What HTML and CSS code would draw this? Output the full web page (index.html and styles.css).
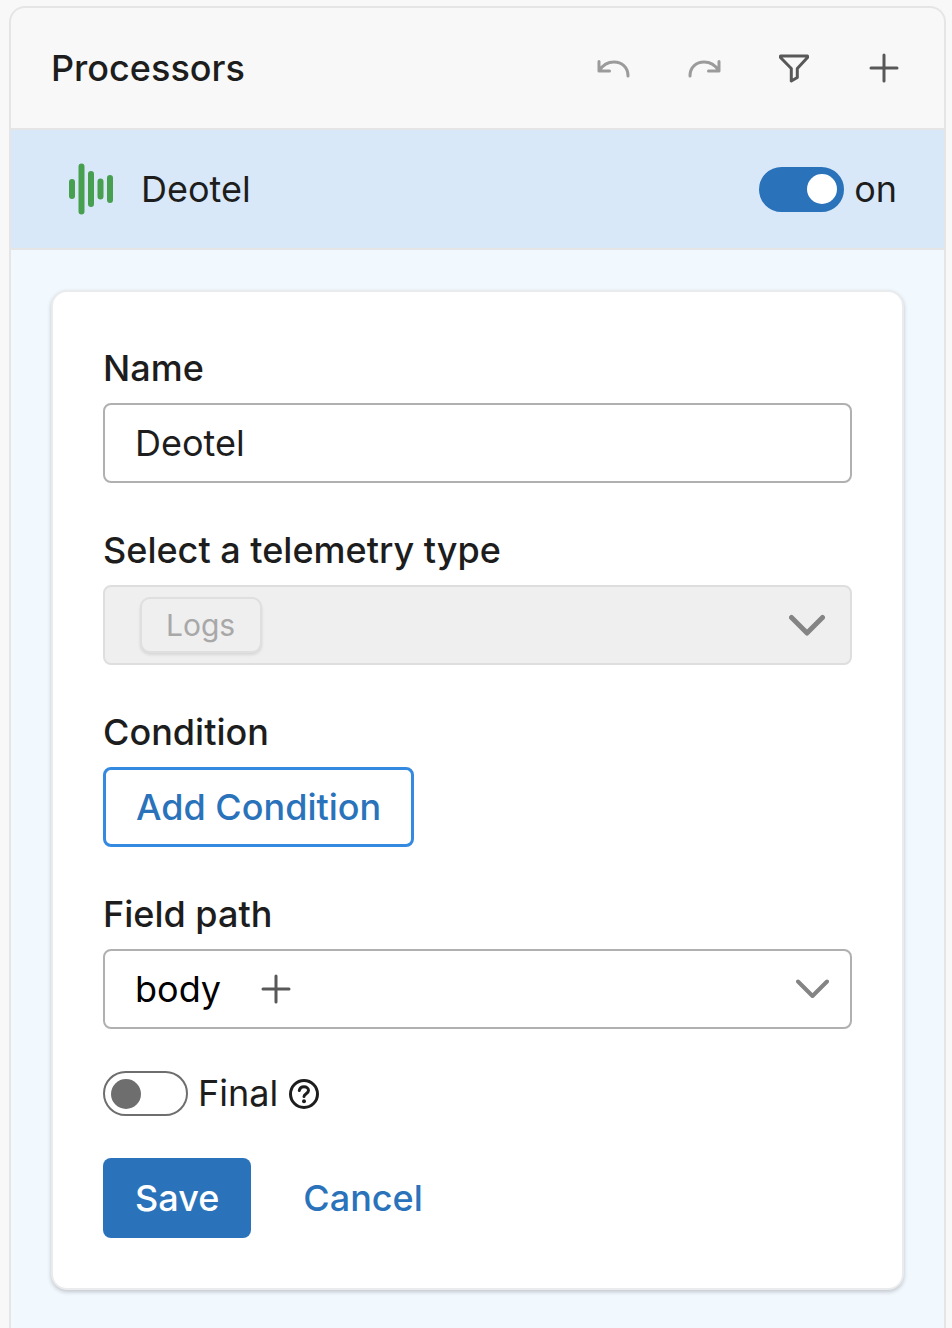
FILE: index.html
```html
<!DOCTYPE html>
<html lang="en">
<head>
<meta charset="utf-8">
<meta name="viewport" content="width=device-width, initial-scale=1">
<title>Processors</title>
<link rel="stylesheet" href="styles.css">
</head>
<body>
<main class="panel">
  <header class="panel-header">
    <h1 class="panel-title">Processors</h1>
    <div class="toolbar">
      <button class="icon-button" type="button" aria-label="Undo" disabled>
        <svg class="icon" viewBox="0 0 32 32"><path d="M1 9.500V19H11.500M1.500 18.500C4.500 13.500 9.500 10 16 10C23.500 10 30 15 30 24"/></svg>
      </button>
      <button class="icon-button" type="button" aria-label="Redo" disabled>
        <svg class="icon" viewBox="0 0 32 32"><path d="M31 9.500V19H20.500M30.500 18.500C27.500 13.500 22.500 10 16 10C8.500 10 2 15 2 24"/></svg>
      </button>
      <button class="icon-button" type="button" aria-label="Filter">
        <svg class="icon" viewBox="0 0 32 32"><path d="M2.500 4H29.500V5.500L19.300 16.500V25.500L13.300 29V16.500L2.500 5.500Z"/></svg>
      </button>
      <button class="icon-button" type="button" aria-label="Add processor">
        <svg class="icon" viewBox="0 0 32 32"><path d="M16 3V29M3 16H29"/></svg>
      </button>
    </div>
  </header>

  <section class="processor-row">
    <svg class="processor-logo" viewBox="0 0 44 52" aria-hidden="true"><path d="M3 19V33M12.500 3.500V48.500M22 11V41M31.500 18.500V33.500M41 15V37"/></svg>
    <h2 class="processor-name">Deotel</h2>
    <label class="toggle-label"><input class="toggle" type="checkbox" role="switch" checked>on</label>
  </section>

  <div class="panel-body">
    <form class="card">
      <div class="field">
        <label class="field-label" for="name">Name</label>
        <input class="control text-input" id="name" type="text" value="Deotel">
      </div>

      <div class="field">
        <label class="field-label" for="telemetry">Select a telemetry type</label>
        <div class="control control-disabled">
          <select class="chip-select" id="telemetry" disabled><option>Logs</option></select>
          <svg class="chevron chevron-large" viewBox="0 0 36 22" aria-hidden="true"><path d="M2.500 3.500L18 19L33.500 3.500"/></svg>
        </div>
      </div>

      <div class="field">
        <label class="field-label" for="condition">Condition</label>
        <button class="button button-outline" id="condition" type="button">Add Condition</button>
      </div>

      <div class="field">
        <label class="field-label" for="path">Field path</label>
        <div class="control">
          <select class="plain-select" id="path"><option>body</option></select>
          <button class="icon-button" type="button" aria-label="Add path segment">
            <svg class="icon" viewBox="0 0 32 32"><path d="M16 3V29M3 16H29"/></svg>
          </button>
          <svg class="chevron" viewBox="0 0 33 20" aria-hidden="true"><path d="M2 2.500L16.500 17L31 2.500"/></svg>
        </div>
      </div>

      <div class="final-row">
        <label class="toggle-label"><input class="toggle" type="checkbox" role="switch">Final</label>
        <button class="help-button" type="button" aria-label="About Final">
          <svg class="help-icon" viewBox="0 0 30 30"><circle cx="15" cy="15" r="13.500"/><path d="M10.300 11.500C10.800 9 12.700 7.800 15 7.800C17.600 7.800 19.500 9.300 19.500 11.500C19.500 14.500 15 14.800 15 17.500"/><path d="M15 22.200V22.300" stroke-width="4"/></svg>
        </button>
      </div>

      <div class="actions">
        <button class="button button-primary" type="submit">Save</button>
        <button class="button button-link" type="button">Cancel</button>
      </div>
    </form>
  </div>
</main>
</body>
</html>
```
FILE: styles.css
```css
* {
  box-sizing: border-box;
}

body {
  margin: 0;
  padding: 6px 6px 0 9px;
  min-height: 100vh;
  display: flex;
  background: #f8f8f8;
  color: #1d1d1d;
  font: 400 36px/53px Inter, "Liberation Sans", sans-serif;
}

button,
input,
select {
  margin: 0;
  font: inherit;
  color: inherit;
}

.panel {
  flex: 1;
  min-width: 0;
  display: flex;
  flex-direction: column;
  border: 2px solid #e5e5e5;
  border-bottom: 0;
  border-radius: 16px 16px 0 0;
  overflow: hidden;
}

.panel-header {
  display: flex;
  align-items: center;
  justify-content: space-between;
  min-height: 122px;
  padding: 0 44px 0 40px;
  border-bottom: 2px solid #e5e5e5;
}

.panel-title {
  margin: 0;
  font-size: 36px;
  font-weight: 500;
}

.toolbar {
  display: flex;
  gap: 58px;
}

.icon-button {
  display: flex;
  padding: 0;
  border: 0;
  background: none;
  color: #585858;
  cursor: pointer;
}

.icon-button:disabled {
  color: #9b9b9b;
  cursor: default;
}

.icon {
  width: 32px;
  height: 32px;
  overflow: visible;
  fill: none;
  stroke: currentColor;
  stroke-width: 3;
  stroke-linecap: round;
  stroke-linejoin: round;
}

.processor-row {
  display: flex;
  align-items: center;
  min-height: 120px;
  padding: 0 47px 0 58px;
  background: #d9e8f8;
  border-bottom: 2px solid #e5e5e5;
}

.processor-logo {
  width: 44px;
  height: 52px;
  fill: none;
  stroke: #479f50;
  stroke-width: 6;
  stroke-linecap: round;
}

.processor-name {
  flex: 1;
  margin: 0 0 0 28px;
  font-size: 36px;
  font-weight: 400;
}

.toggle-label {
  display: flex;
  align-items: center;
  gap: 10px;
}

.toggle {
  appearance: none;
  display: flex;
  align-items: center;
  width: 85px;
  height: 45px;
  padding: 0 6px;
  border: 2px solid #6e6e6e;
  border-radius: 24px;
  background: #fff;
}

.toggle::before {
  content: "";
  width: 30px;
  height: 30px;
  border-radius: 50%;
  background: #6e6e6e;
}

.toggle:checked {
  justify-content: flex-end;
  padding: 0 5px;
  border-color: #2a73bb;
  background: #2a73bb;
}

.toggle:checked::before {
  background: #fff;
}

.panel-body {
  flex: 1;
  padding: 40px 40px 36px;
  background: #f1f8fe;
}

.card {
  display: flex;
  flex-direction: column;
  gap: 41px;
  padding: 50px;
  border: 2px solid #e9ebed;
  border-radius: 16px;
  background: #fff;
  box-shadow: 0 2px 4px rgba(0, 0, 0, 0.2);
}

.field {
  display: flex;
  flex-direction: column;
  align-items: flex-start;
  gap: 8px;
}

.field-label {
  font-weight: 500;
}

.control {
  display: flex;
  align-items: center;
  width: 100%;
  height: 80px;
  padding: 0 21px 0 30px;
  border: 2px solid #b0b0b0;
  border-radius: 8px;
  background: #fff;
}

.control-disabled {
  padding: 0 25px 0 35px;
  border-color: #dedede;
  background: #efefef;
}

.chip-select {
  appearance: none;
  height: 56px;
  padding: 0 24px;
  border: 2px solid #dfdfdf;
  border-radius: 10px;
  background: #efefef;
  box-shadow: 0 2px 3px rgba(0, 0, 0, 0.1);
  color: #a8a8a8;
  font-size: 30px;
  opacity: 1;
}

.plain-select {
  appearance: none;
  height: 54px;
  margin-right: 38px;
  padding: 0;
  border: 0;
  background: none;
  color: #000;
}

.chevron {
  width: 33px;
  height: 20px;
  margin-left: auto;
  fill: none;
  stroke: #848484;
  stroke-width: 4;
  stroke-linecap: round;
  stroke-linejoin: round;
}

.chevron-large {
  width: 36px;
  height: 22px;
  stroke-width: 5;
}

.button {
  height: 80px;
  padding: 0 32px;
  border: 0;
  border-radius: 8px;
  font-weight: 500;
  cursor: pointer;
}

.button-outline {
  padding: 0 30px;
  border: 3px solid #348ae0;
  background: #fff;
  color: #2a73bb;
}

.button-primary {
  background: #2a73bb;
  color: #fff;
}

.button-link {
  padding: 0 20px;
  background: none;
  color: #2a73bb;
}

.final-row {
  display: flex;
  align-items: center;
  gap: 11px;
  height: 47px;
}

.help-button {
  display: flex;
  padding: 0;
  border: 0;
  background: none;
}

.help-icon {
  width: 30px;
  height: 30px;
  fill: none;
  stroke: #1d1d1d;
  stroke-width: 3;
  stroke-linecap: round;
}

.actions {
  display: flex;
  gap: 32px;
}
```
